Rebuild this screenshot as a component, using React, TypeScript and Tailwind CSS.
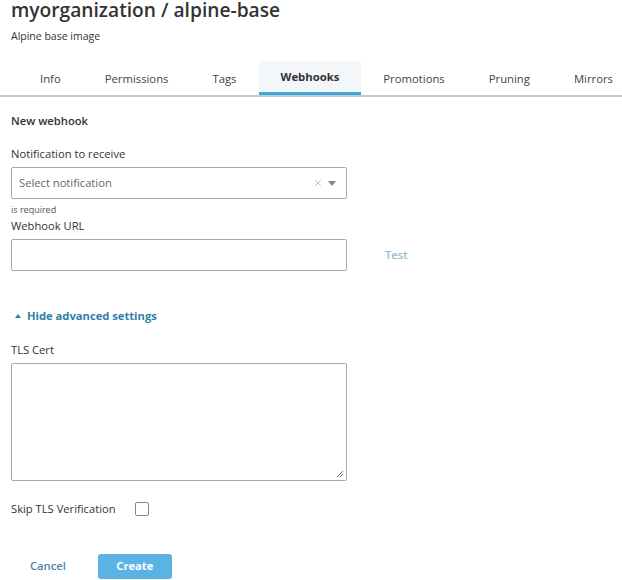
import { X } from "lucide-react";

const tabs = ["Info", "Permissions", "Tags", "Webhooks", "Promotions", "Pruning", "Mirrors"];

function Field({ label, children }: { label: string; children: React.ReactNode }) {
  return (
    <div>
      <div className="text-[11.2px] text-[#333] leading-4 mb-[5px]">{label}</div>
      {children}
    </div>
  );
}

export default function App() {
  return (
    <div className="w-[622px] h-[580px] bg-white overflow-hidden font-['Open_Sans',sans-serif] text-[#333]">
      <h1 className="pl-[11px] text-[19.2px] leading-[22px] font-semibold text-[#333] -mt-[1px]">
        myorganization / alpine-base
      </h1>
      <p className="pl-[11px] mt-[7px] text-[10.5px] leading-4 text-[#333]">Alpine base image</p>

      <div className="mt-[17px] flex border-b-2 border-[#c8c8c8] pl-[18px]">
        {tabs.map((t) => (
          <div
            key={t}
            className={
              t === "Webhooks"
                ? "px-[22px] h-[34px] -mb-[2px] flex items-center text-[11.3px] font-bold bg-[#f3f7f9] border-b-[3px] border-[#3fa7dc] text-[#333]"
                : "px-[22px] h-[34px] flex items-center text-[11.3px] text-[#444]"
            }
          >
            <span className="pt-[2px]">{t}</span>
          </div>
        ))}
      </div>

      <div className="px-[11px]">
        <div className="mt-[16px] text-[11.2px] font-semibold leading-4">New webhook</div>

        <div className="mt-[17px]">
          <Field label="Notification to receive">
            <div className="w-[336px] h-[32px] border border-[#a9a9a9] rounded-[2px] flex items-center pl-[7px] pr-[10px]">
              <span className="flex-1 text-[11.2px] text-[#666]">Select notification</span>
              <X className="w-[10px] h-[10px] text-[#999]" strokeWidth={1.5} />
              <svg className="ml-[5px]" width="8" height="5" viewBox="0 0 8 5">
                <path d="M0 0h8L4 5z" fill="#888" />
              </svg>
            </div>
          </Field>
          <div className="text-[9px] text-[#555] leading-3 mt-[5px]">is required</div>
        </div>

        <div className="mt-[2px] flex items-end">
          <Field label="Webhook URL">
            <div className="w-[336px] h-[32px] border border-[#a9a9a9] rounded-[2px]" />
          </Field>
          <button className="ml-[38px] mb-[7px] text-[11.2px] font-semibold text-[#8fc0cc]">Test</button>
        </div>

        <button className="mt-[37px] ml-[4px] flex items-center text-[11.2px] font-bold text-[#2f7fa8]">
          <svg width="6" height="4" viewBox="0 0 6 4" className="mr-[6px]">
            <path d="M0 4h6L3 0z" fill="#2f7fa8" />
          </svg>
          Hide advanced settings
        </button>

        <div className="mt-[17px]">
          <Field label="TLS Cert">
            <div className="relative w-[336px] h-[118px] border border-[#a9a9a9] rounded-[2px]">
              <svg className="absolute right-[3px] bottom-[3px]" width="7" height="7" viewBox="0 0 7 7">
                <path d="M1 7L7 1M4 7L7 4" stroke="#777" strokeWidth="1" />
              </svg>
            </div>
          </Field>
        </div>

        <div className="mt-[20px] flex items-center">
          <span className="text-[11.2px]">Skip TLS Verification</span>
          <span className="ml-[19px] w-[14px] h-[14px] border border-[#888] rounded-[2px]" />
        </div>

        <div className="mt-[36px] flex items-center">
          <button className="ml-[19px] text-[11.2px] font-semibold text-[#4a86a8]">Cancel</button>
          <button className="ml-[32px] w-[74px] h-[25px] rounded-[3px] bg-[#5bb3e4] text-white text-[11.2px] font-bold">
            Create
          </button>
        </div>
      </div>
    </div>
  );
}
